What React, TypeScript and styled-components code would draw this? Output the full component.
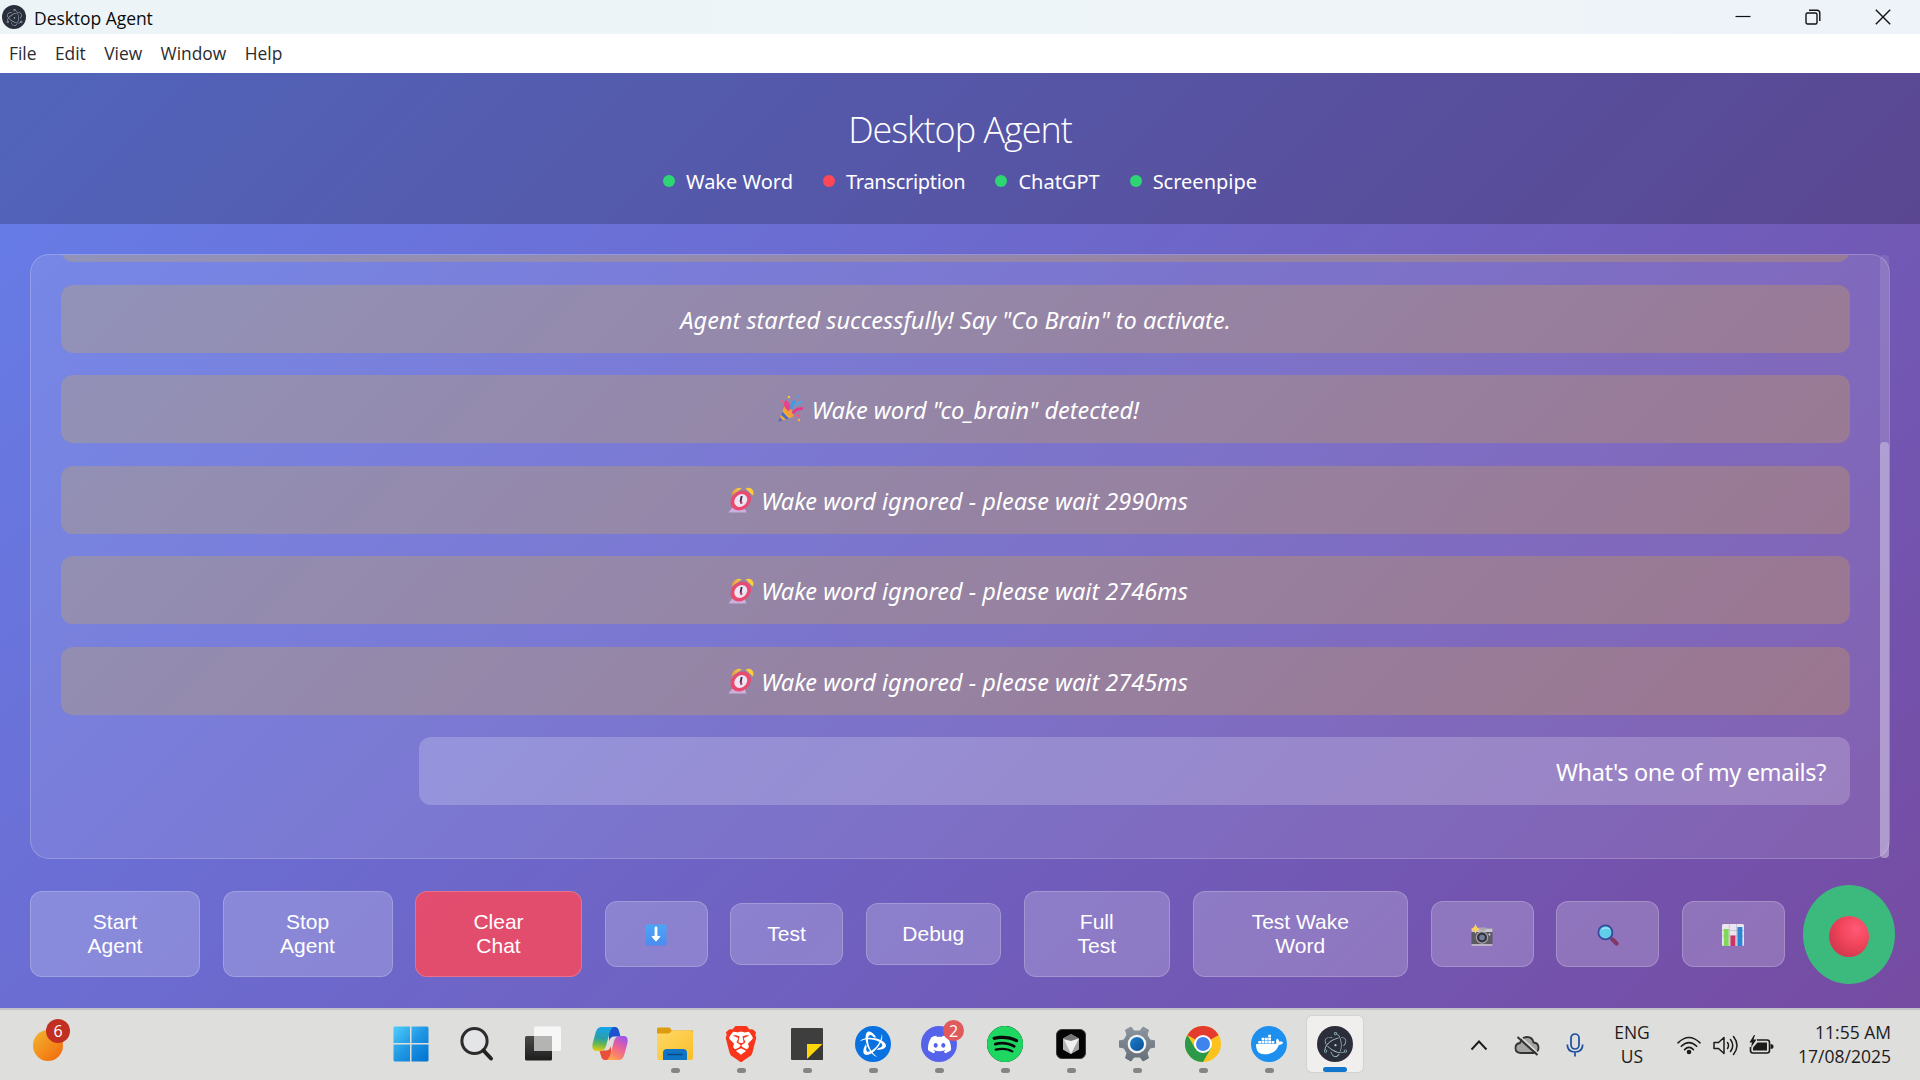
import React from "react";
import styled, { createGlobalStyle, css } from "styled-components";
import { SiBrave, SiDocker, SiSpotify, SiDiscord, SiElectron, SiBattledotnet } from "react-icons/si";

const uiFont = '"Open Sans", "Noto Sans", sans-serif';
const bodyFont = '"Noto Sans", "Open Sans", sans-serif';

const GlobalStyle = createGlobalStyle`
  * { box-sizing: border-box; }
  body { margin: 0; overflow: hidden; font-family: ${uiFont}; }
  svg { display: block; flex: none; }
`;

const Screen = styled.div`
  width: 1920px;
  height: 1080px;
  display: flex;
  flex-direction: column;
  overflow: hidden;
`;

/* ---------- window chrome ---------- */

const TitleBar = styled.div`
  height: 34px;
  flex: none;
  display: flex;
  align-items: center;
  padding: 0 2px;
  background: linear-gradient(90deg, #edf4f7 0%, #eef4f7 75%, #eef3fa 90%);
`;

const WindowTitle = styled.div`
  flex: 1;
  padding: 1px 0 0 8px;
  font-size: 17.5px;
  line-height: 34px;
  letter-spacing: -0.05px;
  color: #0b0b0c;
`;

const ElectronDisc = styled.div<{ $size: number }>`
  width: ${(p) => p.$size}px;
  height: ${(p) => p.$size}px;
  border-radius: 50%;
  display: grid;
  place-items: center;
  flex: none;
  background: #2b2e3a;
  color: #a9cdd3;
`;

const WindowButton = styled.div`
  width: 70px;
  height: 34px;
  display: grid;
  place-items: center;
`;

const MenuBar = styled.div`
  height: 39px;
  flex: none;
  display: flex;
  align-items: center;
  gap: 18.4px;
  padding-left: 9px;
  background: #fff;
`;

const MenuItem = styled.div`
  font-size: 17.4px;
  line-height: 39px;
  color: #2b2b2e;
`;

/* ---------- application ---------- */

const AppBody = styled.main`
  height: 935px;
  flex: none;
  display: flex;
  flex-direction: column;
  color: #fff;
  background: linear-gradient(135deg, #667eea 0%, #764ba2 100%);
`;

const Header = styled.header`
  height: 151px;
  flex: none;
  display: flex;
  flex-direction: column;
  align-items: center;
  padding-top: 33px;
  background: rgba(0, 0, 0, 0.2);
`;

const Heading = styled.h1`
  margin: 0;
  font-size: 36px;
  font-weight: 300;
  line-height: 48px;
  letter-spacing: -1px;
`;

const StatusRow = styled.div`
  display: flex;
  gap: 30px;
  margin-top: 13px;
`;

const Status = styled.div<{ $tracking: number }>`
  display: flex;
  align-items: center;
  gap: 11px;
  font-family: ${bodyFont};
  font-size: 20px;
  line-height: 30px;
  letter-spacing: ${(p) => p.$tracking}px;
`;

const Dot = styled.span<{ $on: boolean }>`
  width: 12px;
  height: 12px;
  margin-bottom: 3px;
  border-radius: 50%;
  background: ${(p) => (p.$on ? "#2ed573" : "#ff4757")};
`;

const Chat = styled.section`
  height: 605px;
  flex: none;
  margin: 30px 30px 0;
  display: flex;
  border: 1px solid rgba(255, 255, 255, 0.2);
  border-radius: 19px;
  background: rgba(255, 255, 255, 0.1);
`;

const MessageList = styled.div`
  flex: 1;
  height: 603px;
  display: flex;
  flex-direction: column;
  justify-content: flex-end;
  gap: 22.5px;
  padding: 0 30px 53px;
  overflow: hidden;
`;

const Message = styled.div<{ $user?: boolean }>`
  height: 68px;
  flex: none;
  display: flex;
  align-items: center;
  gap: 6px;
  padding: 2px 24px 0;
  border-radius: 12px;
  font-family: ${bodyFont};
  font-size: 23.5px;
  ${(p) =>
    p.$user
      ? css`
          width: 1431px;
          align-self: flex-end;
          justify-content: flex-end;
          letter-spacing: -0.38px;
          background: rgba(255, 255, 255, 0.2);
        `
      : css`
          justify-content: center;
          font-style: italic;
          background: rgba(255, 193, 7, 0.2);
        `}
`;

const Emoji = styled.span`
  margin: 0 0 2px 5px;
`;

const ScrollTrack = styled.div`
  width: 9px;
  height: 603px;
  display: flex;
  align-items: flex-end;
  border-radius: 4px;
  background: rgba(255, 255, 255, 0.1);
`;

const ScrollThumb = styled.div`
  width: 9px;
  height: 416px;
  border-radius: 4px;
  background: rgba(255, 255, 255, 0.3);
`;

const Controls = styled.div`
  height: 90px;
  flex: none;
  display: flex;
  align-items: center;
  gap: 22.5px;
  margin: 30px 26px 0 30px;
`;

const Button = styled.button<{ $w: number; $h: number; $danger?: boolean; $glyph?: boolean }>`
  width: ${(p) => p.$w}px;
  height: ${(p) => p.$h}px;
  flex: none;
  display: grid;
  place-items: center;
  margin: 0;
  padding: ${(p) => (p.$glyph ? 2 : 0)}px 30px 0;
  border: 1px solid rgba(255, 255, 255, 0.2);
  border-radius: 12px;
  background: ${(p) => (p.$danger ? "rgba(255, 71, 87, 0.8)" : "rgba(255, 255, 255, 0.2)")};
  color: #fff;
  font: 21px/24px "Liberation Sans", Arial, sans-serif;
  text-align: center;
`;

const MicButton = styled.button`
  width: 92px;
  height: 99px;
  flex: none;
  display: grid;
  place-items: center;
  margin: 0 0 0 -4.5px;
  padding: 0;
  border: 0;
  border-radius: 50%;
  background: #3cb97d;
`;

const RecordDot = styled.span`
  width: 40px;
  height: 41px;
  margin-top: 5px;
  border-radius: 50%;
  background: radial-gradient(circle at 68% 32%, #ff5a78 0%, #f2465c 38%, #d83850 72%, #c13c50 100%);
`;

/* ---------- taskbar ---------- */

const Taskbar = styled.footer`
  height: 72px;
  flex: none;
  display: grid;
  grid-template-columns: 378px 1fr auto;
  border-top: 2px solid #c4c1c8;
  background: #dededc;
`;

const WidgetArea = styled.div`
  padding: 9px 0 0 33px;
`;

const Weather = styled.div`
  width: 38px;
  height: 42px;
  display: flex;
  align-items: flex-end;
`;

const Sun = styled.div`
  position: relative;
  width: 30px;
  height: 31px;
  border-radius: 50%;
  background: linear-gradient(135deg, #eeb42c 5%, #f58a1c 55%, #ef6a0c 95%);
`;

const Badge = styled.span<{ $bg: string; $size: number; $x: number; $y: number }>`
  position: absolute;
  left: ${(p) => p.$x}px;
  top: ${(p) => p.$y}px;
  width: ${(p) => p.$size}px;
  height: ${(p) => p.$size}px;
  border-radius: 50%;
  display: grid;
  place-items: center;
  background: ${(p) => p.$bg};
  color: #fff;
  font-size: 16px;
  line-height: 1;
`;

const AppIcons = styled.div`
  display: flex;
`;

const AppCell = styled.div<{ $active?: boolean }>`
  width: ${(p) => (p.$active ? 56 : 66)}px;
  height: ${(p) => (p.$active ? 56 : 63)}px;
  margin: ${(p) => (p.$active ? "6px 5px 0" : "0")};
  padding-top: ${(p) => (p.$active ? 10 : 16)}px;
  display: flex;
  flex-direction: column;
  align-items: center;
  justify-content: space-between;
  border-radius: 5px;
  background: ${(p) => (p.$active ? "#f0efee" : "transparent")};
  box-shadow: ${(p) => (p.$active ? "0 0 0 1px #d3d2d0" : "none")};
`;

const IconBox = styled.div`
  position: relative;
  width: 36px;
  height: 36px;
  display: grid;
  place-items: center;
`;

const Disc = styled.div<{ $bg: string }>`
  width: 36px;
  height: 36px;
  border-radius: 50%;
  display: grid;
  place-items: center;
  background: ${(p) => p.$bg};
  color: #fff;
`;

const Underline = styled.span<{ $active?: boolean; $show: boolean }>`
  width: ${(p) => (p.$active ? 24 : 9)}px;
  height: 5px;
  border-radius: 3px;
  background: ${(p) => (!p.$show ? "transparent" : p.$active ? "#1277cc" : "#858583")};
`;

const Tray = styled.div`
  display: flex;
  align-items: center;
  padding-right: 29px;
  color: #1b1b1b;
`;

const TrayItem = styled.div<{ $w: number }>`
  width: ${(p) => p.$w}px;
  display: grid;
  place-items: center;
`;

const TrayText = styled.div<{ $w: number; $align: string }>`
  width: ${(p) => p.$w}px;
  text-align: ${(p) => p.$align};
  font-size: 17.5px;
  line-height: 24px;
  padding-bottom: 2px;
`;

/* ---------- drawings ---------- */

const AlarmIcon = () => (
  <svg width="27" height="27" viewBox="0 0 27 27" overflow="visible">
    <defs>
      <linearGradient id="bell" x1="0" x2="1"><stop offset="0" stopColor="#e09a3e" /><stop offset="1" stopColor="#ffd54a" /></linearGradient>
    </defs>
    <g transform="translate(4.5 0.500) skewX(-11)">
      <path d="M4 21 L1 26 H19 L16 21Z" fill="#cdb0de" />
      <path d="M1 9 A6 6 0 0 1 9.500 2Z" fill="url(#bell)" />
      <path d="M13.500 2 A6 6 0 0 1 22 9Z" fill="#ffcd3c" />
      <circle cx="11" cy="14" r="10" fill="#e94a70" />
      <circle cx="11" cy="14" r="6.4" fill="#efe4f4" />
      <path d="M11 9.4V14.5L12.4 17" stroke="#45304f" strokeWidth="1.9" fill="none" />
      <path d="M11 14.5L12.6 17.4" stroke="#e0456c" strokeWidth="1.3" />
    </g>
  </svg>
);

const PartyIcon = () => (
  <svg width="29" height="28" viewBox="0 0 29 28" overflow="visible">
    <path d="M1 27L7.5 11.5Q14 14 15.5 22Z" fill="#f6ab38" />
    <path d="M5.500 16.500L12 23.500L9 24.500L4 20Z" fill="#4b6fc4" />
    <path d="M3 22L6 25.600L1 27Z" fill="#4b6fc4" />
    <ellipse cx="12" cy="16.5" rx="2.800" ry="6.6" transform="rotate(-36 12 16.5)" fill="#f0a03a" />
    <path d="M11 16Q4 10 9 5Q14 9 13 15" fill="#ed3f8c" />
    <path d="M13.500 14Q12.500 8 17 4.500L19 8.500Q15 9.500 16 14" fill="#3b9be8" />
    <path d="M14.500 18Q18 11.500 26.500 12.5L25.500 15Q20 14.500 17 19" fill="#e8368f" />
    <path d="M19 10L25 6" stroke="#4aa6ee" strokeWidth="2" />
    <path d="M18.5 20L23 21.5" stroke="#ee5a8c" strokeWidth="2" />
    <circle cx="12" cy="2" r="1.200" fill="#ffc93c" />
    <circle cx="21" cy="1.500" r="1.200" fill="#4aa6ee" />
    <circle cx="22" cy="25" r="1.200" fill="#ffb13c" />
    <circle cx="5.500" cy="6" r="1.200" fill="#f45c77" />
  </svg>
);

const DownIcon = () => (
  <svg width="22" height="22" viewBox="0 0 22 22">
    <defs><linearGradient id="dn" x2="0" y2="1"><stop stopColor="#4ba6f6" /><stop offset="1" stopColor="#4a8cf0" /></linearGradient></defs>
    <rect x="0.5" y="0.5" width="21" height="21" rx="1.5" fill="url(#dn)" />
    <path d="M11 4V13.5" stroke="#fff" strokeWidth="2.8" strokeLinecap="round" />
    <path d="M7 12.4L11 17.2L15 12.4Z" fill="#fff" stroke="#fff" strokeWidth="1" strokeLinejoin="round" />
  </svg>
);

const CameraIcon = () => (
  <svg width="22" height="22" viewBox="0 0 22 22" overflow="visible">
    <rect x="0.5" y="4.5" width="21" height="17" rx="1" fill="#5c5a62" />
    <path d="M0.5 4.5H21.5V8H0.5Z" fill="#c9c6cf" />
    <rect x="8" y="3.5" width="7" height="3" fill="#aaa7b2" />
    <rect x="0.5" y="20" width="21" height="2" fill="#b9b2c2" />
    <circle cx="11" cy="13.5" r="6.2" fill="#a7a3ae" />
    <circle cx="11" cy="13.5" r="5" fill="#35323d" />
    <circle cx="11" cy="13.5" r="2.8" fill="#73819c" />
    <circle cx="18.5" cy="10.5" r="1" fill="#e7e3ea" />
    <path d="M4.500 0L6 3.200L9 5L6 6.6L4.5 10L3 6.6L0 5L3 3.2Z" fill="#ffd05a" />
  </svg>
);

const LensIcon = () => (
  <svg width="22" height="22" viewBox="0 0 22 22">
    <path d="M13 13.5L15 15.500" stroke="#6e5b9a" strokeWidth="2.500" />
    <path d="M15.500 15.500L19.500 19.5" stroke="#813868" strokeWidth="4.2" strokeLinecap="round" />
    <circle cx="8.4" cy="8.4" r="7" fill="#62cde8" stroke="#34499a" strokeWidth="1.8" />
    <path d="M5 5.4Q8.5 2.5 12.5 5" stroke="#a2ebf7" strokeWidth="1.4" fill="none" />
  </svg>
);

const ChartIcon = () => (
  <svg width="22" height="22" viewBox="0 0 22 22">
    <rect width="22" height="22" rx="1.5" fill="#ebe5f2" />
    <path d="M0 6.5H22M0 12H22M7.3 0V22M14.5 0V22" stroke="#c3bace" strokeWidth="0.8" />
    <rect x="1.8" y="5" width="4.8" height="17" fill="#7fd957" />
    <rect x="8.4" y="11.5" width="5" height="10.5" fill="#cb3565" />
    <rect x="15.4" y="3" width="5" height="19" fill="#2786d6" />
  </svg>
);

const StartIcon = () => (
  <svg width="36" height="36" viewBox="0 0 36 36">
    <defs><linearGradient id="win" x1="0" y1="0" x2="36" y2="36" gradientUnits="userSpaceOnUse"><stop stopColor="#52cffb" /><stop offset="0.5" stopColor="#1f96e4" /><stop offset="1" stopColor="#0070cf" /></linearGradient></defs>
    <path d="M1.5 0.5H17V17H0.5V1.5ZM18.5 0.5H34.5L35.5 1.5V17H18.5ZM0.5 18.5H17V35.5H1.5L0.5 34.5ZM18.5 18.5H35.5V34.5L34.5 35.5H18.5Z" fill="url(#win)" />
  </svg>
);

const SearchIcon = () => (
  <svg width="36" height="36" viewBox="0 0 36 36">
    <circle cx="15.5" cy="15" r="12.6" fill="#e4e5e7" stroke="#2c2c2c" strokeWidth="3" />
    <path d="M24.5 24.500L32 32.500" stroke="#222" strokeWidth="4" strokeLinecap="round" />
  </svg>
);

const TaskViewIcon = () => (
  <svg width="36" height="36" viewBox="0 0 36 36">
    <defs><linearGradient id="tv" x2="0" y2="1"><stop stopColor="#4a4a4a" /><stop offset="1" stopColor="#1d1d1d" /></linearGradient></defs>
    <rect x="0" y="10" width="27" height="24.5" rx="1.5" fill="url(#tv)" />
    <rect x="9" y="0.5" width="27" height="24.5" rx="1.5" fill="#f7f7f7" />
    <path d="M9 10H27V25H9Z" fill="#b4b4b3" />
  </svg>
);

const CopilotIcon = () => (
  <svg width="38" height="36" viewBox="0 0 38 36">
    <defs>
      <linearGradient id="cpA" x1="0.3" y1="0" x2="0.2" y2="1"><stop stopColor="#18a3e8" /><stop offset="0.45" stopColor="#28a0a8" /><stop offset="0.72" stopColor="#6cba48" /><stop offset="1" stopColor="#eec91c" /></linearGradient>
      <linearGradient id="cpB" x1="0.8" y1="0" x2="0.3" y2="1"><stop stopColor="#9a56ee" /><stop offset="0.45" stopColor="#e8609c" /><stop offset="0.8" stopColor="#fb8468" /><stop offset="1" stopColor="#ffa552" /></linearGradient>
    </defs>
    <path d="M18 1H24Q27 1 28 5L29.5 10.5H23Q19.5 10.5 18 15Z" fill="#1c52cf" />
    <path d="M20 34H14Q11 34 10 30L8.5 24.5H15Q18.5 24.5 20 20Z" fill="#e8503a" />
    <path d="M10 1H22Q19.5 3 18 9L15 20Q13.5 25 9 25H5Q0.5 25 1.5 18L4.5 7Q6 1 10 1Z" fill="url(#cpA)" />
    <path d="M28 34H16Q18.500 32 20 26L23 15Q24.500 10 29 10H33Q37.500 10 36.500 17L33.500 28Q32 34 28 34Z" fill="url(#cpB)" />
  </svg>
);

const FolderIcon = () => (
  <svg width="36" height="36" viewBox="0 0 36 36">
    <defs><linearGradient id="fd" x2="1" y2="1"><stop stopColor="#ffd968" /><stop offset="1" stopColor="#fbbd28" /></linearGradient></defs>
    <path d="M0 7V3Q0 1.500 1.500 1.500H12Q13.500 1.500 14.500 4.500H36V10H0Z" fill="#dd9c10" />
    <path d="M0 7.500H11Q13 7.500 15 4.500H34.500L36 6V32Q36 34 34 34H2Q0 34 0 32Z" fill="url(#fd)" />
    <path d="M6 34V27Q6 23 10 23H26Q30 23 30 27V34Z" fill="#0f74c4" />
    <path d="M11 28.500H25" stroke="#0a4a86" strokeWidth="1.600" strokeLinecap="round" />
  </svg>
);

const BraveIcon = () => (
  <svg width="36" height="36" viewBox="0 0 24 24">
    <path d="M6 4H18L20 8L17 17L12 21L7 17L4 8Z" fill="#fff" />
    <SiBrave size={24} color="#f9361b" />
  </svg>
);

const NotesIcon = () => (
  <svg width="32" height="36" viewBox="0 0 32 36">
    <path d="M0 3Q0 2 1 2H31Q32 2 32 3V33Q32 34 31 34H1Q0 34 0 33Z" fill="#3e3e3e" />
    <path d="M16 18H32V33Q32 34 31 34H16Z" fill="#383838" />
    <path d="M16 18H31.500L16 33Z" fill="#ffd60a" />
  </svg>
);

const CursorIcon = () => (
  <svg width="30" height="30" viewBox="0 0 30 30">
    <rect x="0.500" y="0.500" width="29" height="29" rx="5.500" fill="#050505" stroke="#3a3a3a" />
    <path d="M15 5L23 9.500V20.500L15 25L7 20.500V9.500Z" fill="#a2a2a2" />
    <path d="M7 9.500L15 5L23 9.500L15 12Z" fill="#777" />
    <path d="M7 9.500L15 14V25L7 20.500Z" fill="#b5b5b5" />
    <path d="M8 10.500L15 12L23 9.500L15 25Z" fill="#f0f0f0" />
  </svg>
);

const GearIcon = () => (
  <svg width="36" height="36" viewBox="0 0 36 36">
    <defs>
      <linearGradient id="gr" x2="0" y2="1"><stop stopColor="#8c959d" /><stop offset="1" stopColor="#66707a" /></linearGradient>
      <linearGradient id="gc" x2="1" y2="1"><stop stopColor="#1c7fce" /><stop offset="1" stopColor="#0b4f92" /></linearGradient>
    </defs>
    <path
      d="M12 1L15 5H21L24 1L29.500 4L28 9L31 14L36 15V21L31 22L28 27L29.500 32L24 35L21 31H15L12 35L6.500 32L8 27L5 22L0 21V15L5 14L8 9L6.500 4Z"
      fill="url(#gr)"
      stroke="url(#gr)"
      strokeLinejoin="round"
    />
    <circle cx="18" cy="18" r="9.300" fill="#f3f4f5" />
    <circle cx="18" cy="18" r="7" fill="url(#gc)" />
  </svg>
);

const ChromeIcon = () => (
  <svg width="36" height="36" viewBox="0 0 36 36">
    <circle cx="18" cy="18" r="18" fill="#fcc31e" />
    <path d="M18 18L2.400 9A18 18 0 0 1 33.600 9Z" fill="#e33b2e" />
    <path d="M2.400 9A18 18 0 0 0 18 36L25.800 22.500L18 18L10.200 22.500Z" fill="#2a9a48" />
    <circle cx="18" cy="18" r="9" fill="#fff" />
    <circle cx="18" cy="18" r="7" fill="#3f83ee" />
  </svg>
);

const SpotifyDisc = () => (
  <Disc $bg="#0b0b0b">
    <SiSpotify size={36} color="#1ed760" />
  </Disc>
);

const ChevronUp = () => (
  <svg width="18" height="12" viewBox="0 0 18 12"><path d="M1.500 10.500L9 2.500L16.500 10.500" fill="none" stroke="#1b1b1b" strokeWidth="1.900" /></svg>
);

const CloudOff = () => (
  <svg width="26" height="22" viewBox="0 0 26 22">
    <path d="M7 19Q1.500 19 1.500 14Q1.500 9.500 6 9Q7.500 3 13 3Q18.500 3 19.500 8.500Q24.500 9 24.500 13.800Q24.500 19 19 19Z" fill="#a5a5a3" stroke="#333" strokeWidth="1.800" />
    <path d="M5 1.500L25 20" stroke="#dededc" strokeWidth="1.600" />
    <path d="M3.500 3L23.500 21" stroke="#333" strokeWidth="2" />
  </svg>
);

const MicIcon = () => (
  <svg width="18" height="24" viewBox="0 0 18 24" fill="none" stroke="#1d4f9e" strokeWidth="1.700">
    <rect x="5" y="1" width="8" height="15" rx="4" />
    <path d="M1.300 11.500Q1.300 19 9 19Q16.700 19 16.700 11.500M9 19V23.500" />
  </svg>
);

const WifiIcon = () => (
  <svg width="24" height="19" viewBox="0 0 24 19" fill="none" stroke="#1b1b1b" strokeWidth="1.600" strokeLinecap="round">
    <path d="M1 6.800Q12 -3.800 23 6.800M4.300 10.300Q12 2.800 19.700 10.300M7.600 13.600Q12 9.200 16.400 13.600" />
    <circle cx="12" cy="16" r="1.500" fill="#1b1b1b" />
  </svg>
);

const VolumeIcon = () => (
  <svg width="25" height="21" viewBox="0 0 25 21" fill="none" stroke="#1b1b1b" strokeWidth="1.500" strokeLinejoin="round" strokeLinecap="round">
    <path d="M1 7.500H5.500L11 2.500V18.500L5.500 13.500H1Z" />
    <path d="M14.500 7.500Q16.500 10.500 14.500 13.500M17.500 4.500Q22 10.500 17.500 16.500M20.500 1.500Q27.500 10.500 20.500 19.500" />
  </svg>
);

const BatteryIcon = () => (
  <svg width="25" height="20" viewBox="0 0 25 20">
    <path d="M8 5H18Q20.500 5 20.500 7.500V15.500Q20.500 18 18 18H4Q1.500 18 1.500 15.500V12" fill="none" stroke="#1b1b1b" strokeWidth="1.600" />
    <path d="M8.500 7.500H18V15.500H4V12.500Z" fill="#1b1b1b" />
    <path d="M21.500 9V14Q24.500 14 24.500 11.500Q24.500 9 21.500 9Z" fill="#1b1b1b" />
    <path d="M5 0L0.500 7.500H3L2 12.500L7.500 4.500H4.500L6 0Z" fill="#1b1b1b" />
  </svg>
);

/* ---------- data ---------- */

const statuses = [
  { label: "Wake Word", on: true, tracking: 0 },
  { label: "Transcription", on: false, tracking: -0.3 },
  { label: "ChatGPT", on: true, tracking: 0 },
  { label: "Screenpipe", on: true, tracking: 0 },
];

const messages: { text: string; icon?: React.ReactNode; user?: boolean }[] = [
  { text: "" },
  { text: 'Agent started successfully! Say "Co Brain" to activate.' },
  { text: 'Wake word "co_brain" detected!', icon: <PartyIcon /> },
  { text: "Wake word ignored - please wait 2990ms", icon: <AlarmIcon /> },
  { text: "Wake word ignored - please wait 2746ms", icon: <AlarmIcon /> },
  { text: "Wake word ignored - please wait 2745ms", icon: <AlarmIcon /> },
  { text: "What's one of my emails?", user: true },
];

const buttons: { label: React.ReactNode; w: number; h: number; danger?: boolean; glyph?: boolean }[] = [
  { label: <>Start<br />Agent</>, w: 170, h: 86 },
  { label: <>Stop<br />Agent</>, w: 170, h: 86 },
  { label: <>Clear<br />Chat</>, w: 167, h: 86, danger: true },
  { label: <DownIcon />, w: 103, h: 66, glyph: true },
  { label: "Test", w: 113, h: 62 },
  { label: "Debug", w: 135.5, h: 62 },
  { label: <>Full<br />Test</>, w: 146.5, h: 86 },
  { label: <>Test Wake<br />Word</>, w: 215.5, h: 86 },
  { label: <CameraIcon />, w: 103, h: 66, glyph: true },
  { label: <LensIcon />, w: 103, h: 66, glyph: true },
  { label: <ChartIcon />, w: 103, h: 66, glyph: true },
];

const apps: { icon: React.ReactNode; running?: boolean; active?: boolean; badge?: string }[] = [
  { icon: <StartIcon /> },
  { icon: <SearchIcon /> },
  { icon: <TaskViewIcon /> },
  { icon: <CopilotIcon /> },
  { icon: <FolderIcon />, running: true },
  { icon: <BraveIcon />, running: true },
  { icon: <NotesIcon />, running: true },
  { icon: <Disc $bg="#0a72e0"><SiBattledotnet size={26} /></Disc>, running: true },
  { icon: <Disc $bg="#5563ea"><SiDiscord size={23} /></Disc>, running: true, badge: "2" },
  { icon: <SpotifyDisc />, running: true },
  { icon: <CursorIcon />, running: true },
  { icon: <GearIcon />, running: true },
  { icon: <ChromeIcon />, running: true },
  { icon: <Disc $bg="#1d8fee"><SiDocker size={27} /></Disc>, running: true },
  { icon: <ElectronDisc $size={36}><SiElectron size={25} /></ElectronDisc>, running: true, active: true },
];

export default function App() {
  return (
    <Screen>
      <GlobalStyle />
      <TitleBar>
        <ElectronDisc $size={24}><SiElectron size={17} /></ElectronDisc>
        <WindowTitle>Desktop Agent</WindowTitle>
        <WindowButton>
          <svg width="16" height="16" viewBox="0 0 16 16"><path d="M0.500 7.500H15.500" stroke="#111" strokeWidth="1.200" /></svg>
        </WindowButton>
        <WindowButton>
          <svg width="16" height="16" viewBox="0 0 16 16" fill="none" stroke="#111" strokeWidth="1.400">
            <rect x="1" y="4" width="11" height="11" rx="1.500" />
            <path d="M4 1.200H12Q14.800 1.200 14.800 4V12" />
          </svg>
        </WindowButton>
        <WindowButton>
          <svg width="16" height="16" viewBox="0 0 16 16"><path d="M0.800 0.800L15.200 15.200M15.200 0.800L0.800 15.200" stroke="#111" strokeWidth="1.400" /></svg>
        </WindowButton>
      </TitleBar>
      <MenuBar>
        {["File", "Edit", "View", "Window", "Help"].map((m) => <MenuItem key={m}>{m}</MenuItem>)}
      </MenuBar>
      <AppBody>
        <Header>
          <Heading>Desktop Agent</Heading>
          <StatusRow>
            {statuses.map((s) => (
              <Status key={s.label} $tracking={s.tracking}><Dot $on={s.on} />{s.label}</Status>
            ))}
          </StatusRow>
        </Header>
        <Chat>
          <MessageList>
            {messages.map((m, i) => (
              <Message key={i} $user={m.user}>
                {m.icon && <Emoji>{m.icon}</Emoji>}
                <span>{m.text}</span>
              </Message>
            ))}
          </MessageList>
          <ScrollTrack><ScrollThumb /></ScrollTrack>
        </Chat>
        <Controls>
          {buttons.map((b, i) => (
            <Button key={i} $w={b.w} $h={b.h} $danger={b.danger} $glyph={b.glyph}><span>{b.label}</span></Button>
          ))}
          <MicButton><RecordDot /></MicButton>
        </Controls>
      </AppBody>
      <Taskbar>
        <WidgetArea>
          <Weather><Sun><Badge $bg="#c12f22" $size={24} $x={13} $y={-11}>6</Badge></Sun></Weather>
        </WidgetArea>
        <AppIcons>
          {apps.map((a, i) => (
            <AppCell key={i} $active={a.active}>
              <IconBox>
                {a.icon}
                {a.badge && <Badge $bg="#e05a5c" $size={21} $x={22} $y={-6}>{a.badge}</Badge>}
              </IconBox>
              <Underline $show={!!a.running} $active={a.active} />
            </AppCell>
          ))}
        </AppIcons>
        <Tray>
          <TrayItem $w={48}><ChevronUp /></TrayItem>
          <TrayItem $w={48}><CloudOff /></TrayItem>
          <TrayItem $w={48}><MicIcon /></TrayItem>
          <TrayText $w={66} $align="center">ENG<br />US</TrayText>
          <TrayItem $w={48}><WifiIcon /></TrayItem>
          <TrayItem $w={25}><VolumeIcon /></TrayItem>
          <TrayItem $w={47}><BatteryIcon /></TrayItem>
          <TrayText $w={106} $align="right">11:55 AM<br />17/08/2025</TrayText>
        </Tray>
      </Taskbar>
    </Screen>
  );
}
